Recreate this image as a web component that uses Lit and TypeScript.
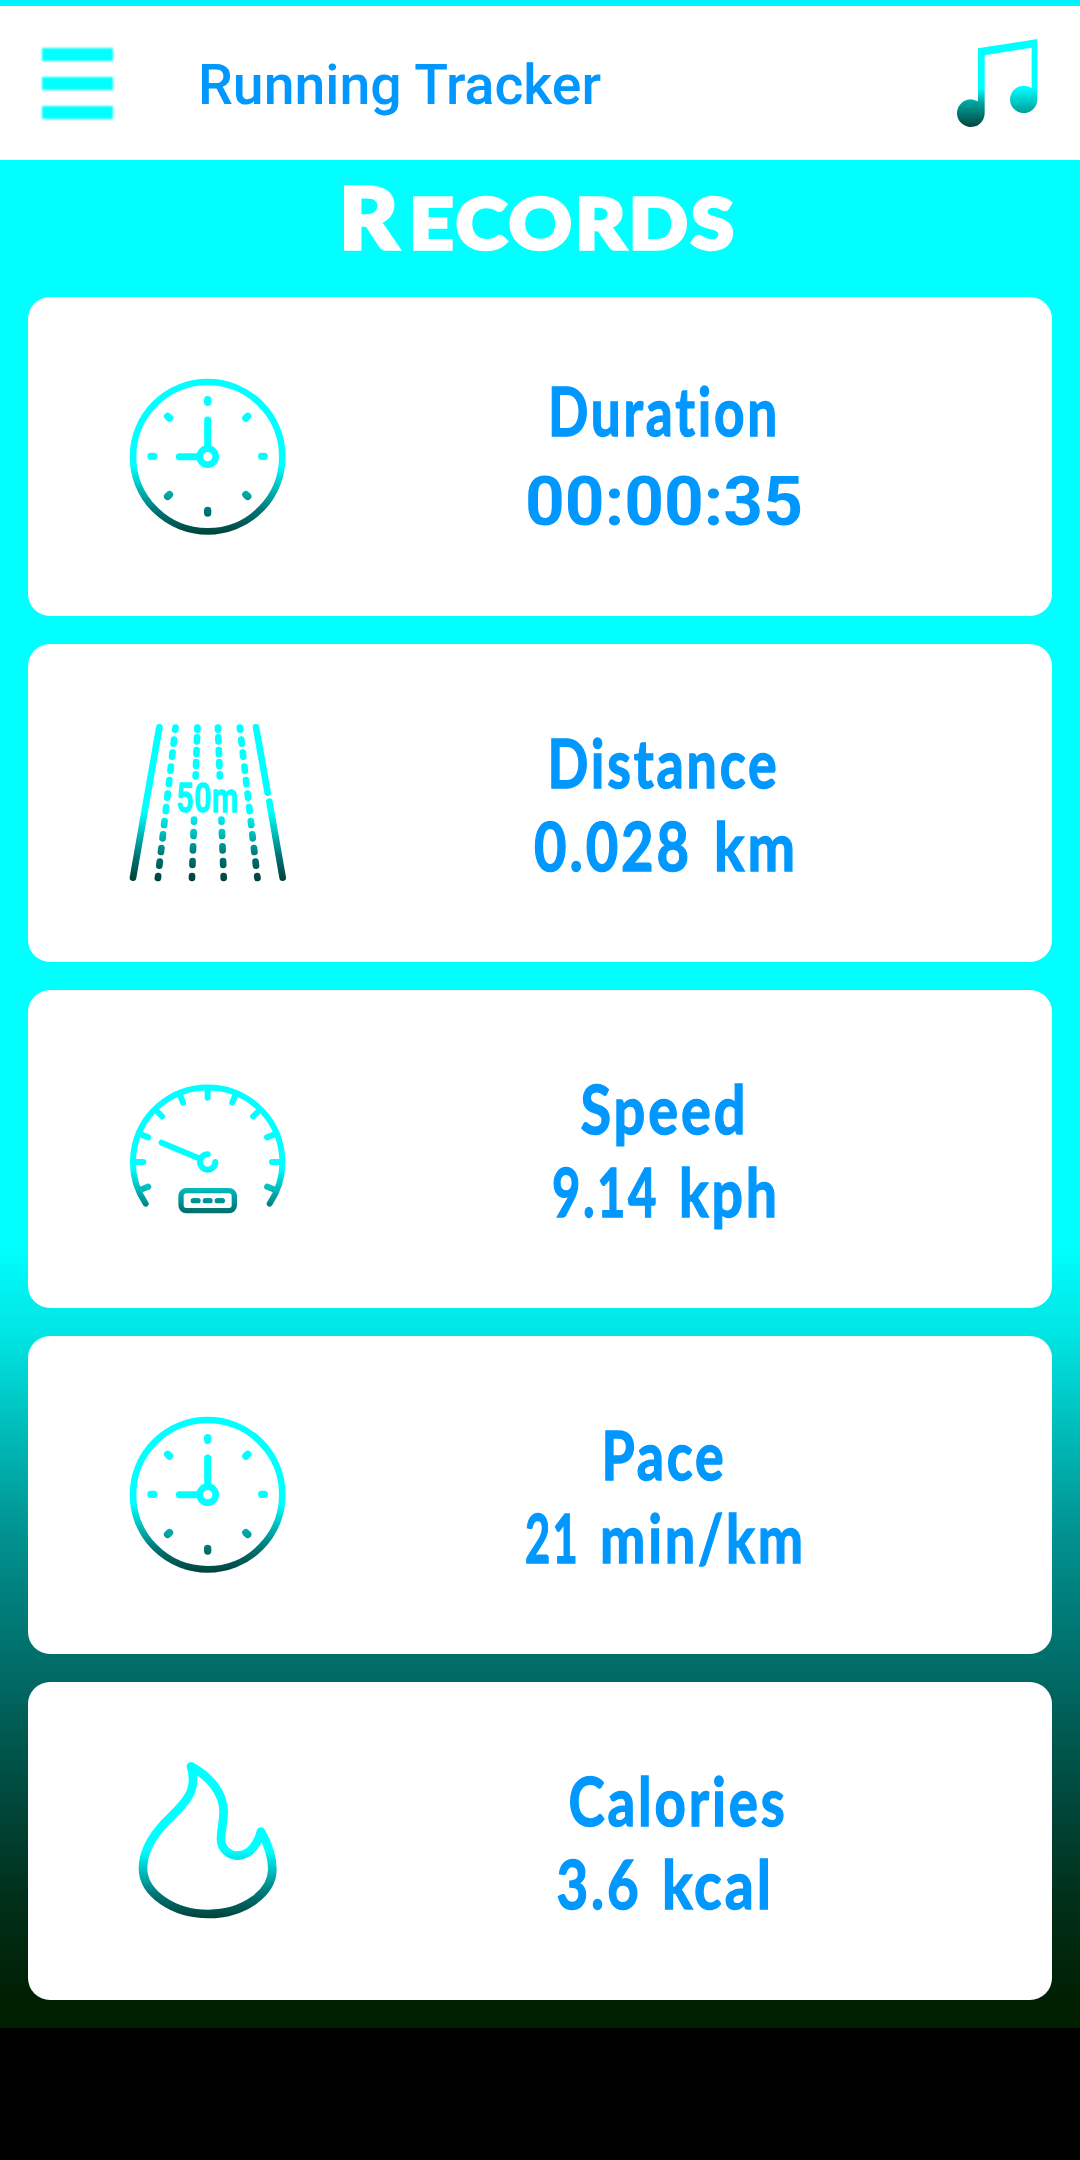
import { LitElement, html, svg, css } from "lit";
import { customElement, property } from "lit/decorators.js";

type IconName = "clock" | "track" | "gauge" | "flame";

/** A word, its left edge inside the text column and its advance width. */
type Word = [text: string, x: number, width: number];

interface Line {
  words: Word[];
  y: number;
  digits?: boolean;
}

interface RecordEntry {
  icon: IconName;
  label: Line;
  value: Line;
}

const RECORDS: RecordEntry[] = [
  {
    icon: "clock",
    label: { words: [["Duration", 148, 232]], y: 138 },
    value: { words: [["00:00:35", 125, 278]], y: 227, digits: true },
  },
  {
    icon: "track",
    label: { words: [["Distance", 147.5, 232]], y: 143.5 },
    value: { words: [["0.028", 134, 158], ["km", 314, 84]], y: 226.5 },
  },
  {
    icon: "gauge",
    label: { words: [["Speed", 180.5, 168]], y: 143.5 },
    value: { words: [["9.14", 152, 107], ["kph", 279, 101]], y: 226.5 },
  },
  {
    icon: "clock",
    label: { words: [["Pace", 201.5, 125]], y: 143.5 },
    value: { words: [["21", 125, 55], ["min/km", 200, 206]], y: 226.5 },
  },
  {
    icon: "flame",
    label: { words: [["Calories", 168.5, 219]], y: 143.5 },
    value: { words: [["3.6", 156.5, 85], ["kcal", 262, 112]], y: 226.5 },
  },
];

const FADE: Record<IconName, [number, number]> = {
  clock: [55, 525],
  track: [75, 540],
  gauge: [72, 520],
  flame: [70, 535],
};

const SHIFT: Record<IconName, number> = { clock: 9, track: -9, gauge: 33, flame: -3 };

const polar = (cx: number, cy: number, r: number, deg: number) => {
  const a = (deg * Math.PI) / 180;
  return [cx + r * Math.sin(a), cy - r * Math.cos(a)];
};

const tick = (cx: number, cy: number, r1: number, r2: number, deg: number) => {
  const [x1, y1] = polar(cx, cy, r1, deg);
  const [x2, y2] = polar(cx, cy, r2, deg);
  return `M${x1.toFixed(1)} ${y1.toFixed(1)}L${x2.toFixed(1)} ${y2.toFixed(1)}`;
};

const lane = (xTop: number, xBottom: number, ys: number[]) =>
  ys
    .map((y) => {
      const slope = (xBottom - xTop) / 445;
      const x = xTop + slope * (y - 86);
      const h = y < 90 || y > 525 || y === 226 || y === 362 ? 3 : 6;
      return `M${(x - slope * h).toFixed(1)} ${y - h}L${(x + slope * h).toFixed(1)} ${y + h}`;
    })
    .join("");

const OUTER_LANE = [86, 125, 164, 206, 246, 287, 327, 369, 409, 450, 491, 531];
const INNER_LANE = [86, 118, 156, 192, 226, 362, 402, 445, 489, 531];

const clockArt = svg`
  <circle cx="293" cy="290" r="224" stroke-width="20" />
  <path stroke-width="22" d=${[0, 45, 90, 135, 180, 225, 270, 315]
    .map((d) => tick(293, 289, 162, 170, d))
    .join("")} />
  <path stroke-width="21" d="M293 180V262M208 290H266" />
  <circle cx="293" cy="290" r="24" stroke-width="20" />
`;

const trackArt = svg`
  <path stroke-width="20" d="M148 82L69 533M438 82L473 278M478 305L518 533" />
  <path stroke-width="20" d=${
    lane(196, 144, OUTER_LANE) +
    lane(262, 246, INNER_LANE) +
    lane(324, 341, INNER_LANE) +
    lane(390, 442, OUTER_LANE)
  } />
  <text class="distance-mark" x="199" y="336" textLength="188"
    lengthAdjust="spacingAndGlyphs">50m</text>
`;

const gaugeArt = svg`
  <path stroke-width="18" d="M107 431A224 224 0 1 1 479 431" />
  <path stroke-width="18" d=${[-112.5, -90, -67.5, -45, -22.5, 0, 22.5, 45, 67.5, 90, 112.5]
    .map((d) => tick(293, 306, 193, 222, d))
    .join("")} />
  <path stroke-width="18" d="M155 248L272 297M293 283A23 23 0 1 0 316 306" />
  <rect x="213" y="392" width="160" height="60" rx="16" stroke-width="16" />
  <path stroke-width="16" d="M250 422H264M286 422H300M322 422H337" />
`;

const flameArt = svg`
  <path stroke-width="26" d="M243 79C300 110 342 160 341 218C340 250 333 270 333 300
    C335 330 360 347 382 347C415 345 440 320 453 275C470 305 487 345 487 388
    C487 460 400 522 295 522C190 522 99 460 99 385C99 330 130 285 165 248
    C215 197 268 160 243 79Z" />
`;

const ART = { clock: clockArt, track: trackArt, gauge: gaugeArt, flame: flameArt };

@customElement("record-card")
export class RecordCard extends LitElement {
  @property({ attribute: false }) entry!: RecordEntry;

  static styles = css`
    :host {
      display: flex;
      height: 318px;
      border-radius: 22px;
      background: #fff;
      align-items: flex-end;
      overflow: hidden;
    }
    .icon {
      width: 200px;
      height: 200px;
      margin: 0 0 59px 82px;
      flex: none;
      fill: none;
      stroke: url(#fade);
      stroke-linecap: round;
      stroke-linejoin: round;
    }
    .distance-mark {
      font: 500 121px Roboto, sans-serif;
      letter-spacing: 4px;
      fill: #0ff;
      stroke: #0ff;
      stroke-width: 5;
    }
    .info {
      width: 530px;
      height: 318px;
      margin-left: 90px;
      flex: none;
      fill: #0098ff;
    }
    .line {
      font: 700 67px Lato, "Liberation Sans", sans-serif;
      font-variant-ligatures: none;
      letter-spacing: 3.5px;
      stroke: #0098ff;
      stroke-width: 1.4;
    }
    .digits {
      font: 700 68px Roboto, "Liberation Sans", sans-serif;
    }
  `;

  private line(l: Line) {
    return svg`<text class=${l.digits ? "digits" : "line"} y=${l.y}>${l.words.map(
      ([text, x, width]) => svg`<tspan x=${x} textLength=${width}
        lengthAdjust="spacingAndGlyphs">${text}</tspan> `
    )}</text>`;
  }

  render() {
    const { icon, label, value } = this.entry;
    const [y1, y2] = FADE[icon];
    return html`
      <svg class="icon" viewBox="0 0 600 600">
        <defs>
          <linearGradient id="fade" gradientUnits="userSpaceOnUse" x1="0" x2="0" y1=${y1} y2=${y2}>
            <stop offset="0.56" stop-color="#00ffff" />
            <stop offset="0.7" stop-color="#00bcbc" />
            <stop offset="0.84" stop-color="#007676" />
            <stop offset="1" stop-color="#00423a" />
          </linearGradient>
        </defs>
        <g transform="translate(0 ${SHIFT[icon]})">${ART[icon]}</g>
      </svg>
      <svg class="info" viewBox="0 0 530 318">${this.line(label)}${this.line(value)}</svg>
    `;
  }
}

@customElement("app-root")
export class AppRoot extends LitElement {
  static styles = css`
    :host {
      display: flex;
      flex-direction: column;
      width: 1080px;
      height: 2160px;
      background: #000;
      overflow: hidden;
    }
    .status {
      height: 6px;
      flex: none;
      background: #00f4ff;
    }
    .toolbar {
      height: 154px;
      flex: none;
      box-sizing: border-box;
      padding: 0 36px 0 42px;
      display: flex;
      align-items: center;
      background: #fff;
    }
    .menu {
      display: flex;
      flex-direction: column;
      gap: 16px;
      width: 71px;
      filter: blur(0.9px);
    }
    .bar {
      height: 13px;
      background: #0ff;
    }
    .title {
      margin: 6px 0 0 85px;
      flex: 1;
      font: 500 55.4px/64px Roboto, sans-serif;
      color: #0098ff;
      white-space: nowrap;
    }
    .music {
      width: 90px;
      height: 100px;
      flex: none;
    }
    .page {
      height: 1868px;
      flex: none;
      box-sizing: border-box;
      padding: 0 28px;
      display: flex;
      flex-direction: column;
      background: linear-gradient(
        #00ffff 58%,
        #00e4e2 63%,
        #00bcba 68%,
        #009290 73.5%,
        #006c68 80.7%,
        #004c40 87%,
        #00301a 93%,
        #001e00 99%
      );
    }
    .heading {
      height: 137px;
      flex: none;
      fill: #fff;
      stroke: #fff;
      stroke-width: 3.5;
      font-family: Lato, "Liberation Sans", sans-serif;
      font-weight: 900;
    }
    .initial {
      font-size: 85px;
    }
    .rest {
      font-size: 71px;
      letter-spacing: 3px;
    }
    .list {
      display: flex;
      flex-direction: column;
      gap: 28px;
    }
    .list record-card:first-child {
      height: 319px;
    }
  `;

  render() {
    return html`
      <div class="status"></div>
      <header class="toolbar">
        <div class="menu">
          <div class="bar"></div>
          <div class="bar"></div>
          <div class="bar"></div>
        </div>
        <div class="title">Running Tracker</div>
        <svg class="music" viewBox="162 99 270 300">
          <defs>
            <linearGradient id="left" gradientUnits="userSpaceOnUse" x1="0" x2="0" y1="265" y2="381">
              <stop offset="0" stop-color="#00ffff" />
              <stop offset="0.35" stop-color="#00a6a2" />
              <stop offset="1" stop-color="#00463e" />
            </linearGradient>
            <linearGradient id="right" gradientUnits="userSpaceOnUse" x1="0" x2="0" y1="262" y2="340">
              <stop offset="0" stop-color="#00ffff" />
              <stop offset="1" stop-color="#009c98" />
            </linearGradient>
          </defs>
          <path fill="url(#right)" d="M412 117V298A41 41 0 1 1 395 265V143L300 158V135Z" />
          <path fill="url(#left)" d="M234 145L302 134.300V158L254 166V340A41.500 41.500 0 1 1 234 304Z" />
        </svg>
      </header>
      <main class="page">
        <svg class="heading" viewBox="0 0 1024 137">
          <text y="88.5">
            <tspan class="initial" x="311" textLength="59" lengthAdjust="spacingAndGlyphs">R</tspan><tspan
              class="rest" x="381" textLength="328" lengthAdjust="spacingAndGlyphs">ECORDS</tspan>
          </text>
        </svg>
        <div class="list">
          ${RECORDS.map((r) => html`<record-card .entry=${r}></record-card>`)}
        </div>
      </main>
    `;
  }
}
